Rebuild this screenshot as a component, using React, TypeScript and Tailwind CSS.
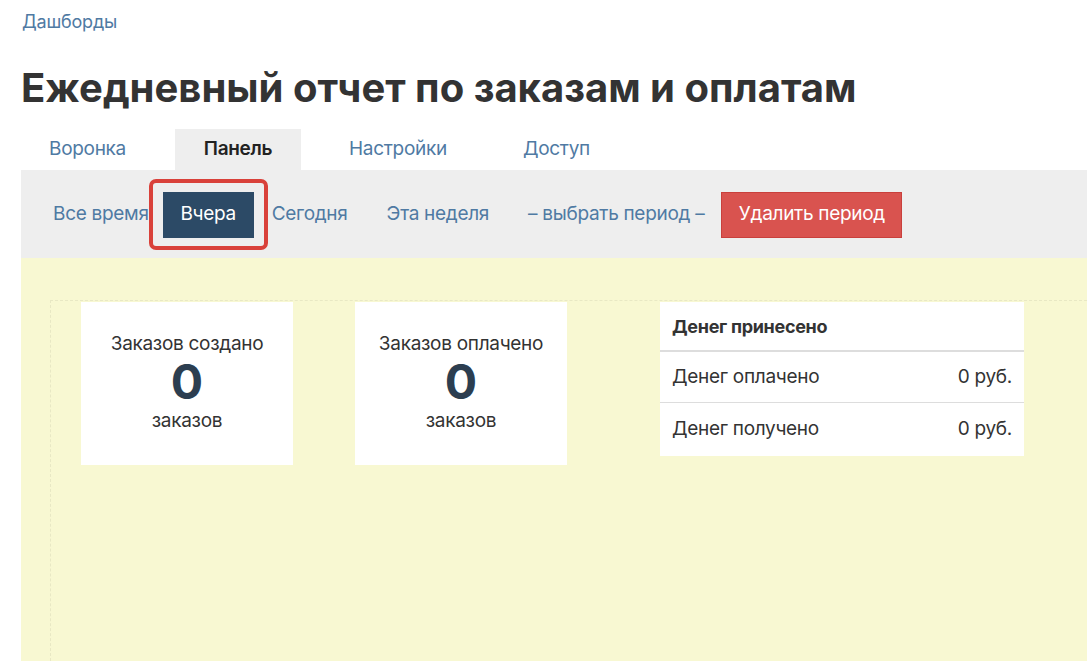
import React from "react";

const font = { fontFamily: "Inter, 'Noto Sans', sans-serif" };

function StatCard({ title }: { title: string }) {
  return (
    <div className="w-[212px] h-[163px] bg-white flex flex-col items-center pt-[29px] text-[#333]">
      <div className="text-[19px] leading-[26px] tracking-[-0.3px]">{title}</div>
      <div className="text-[48px] leading-[52px] font-bold text-[#2c3e50] -mt-[1px]">0</div>
      <div className="text-[19px] leading-[26px] tracking-[-0.3px]">заказов</div>
    </div>
  );
}

export default function App() {
  return (
    <div style={font} className="w-[1087px] h-[661px] overflow-hidden bg-white">
      <div className="pl-[22px] pt-[10px] text-[18px] leading-[24px] text-[#4f7aa3] tracking-[-0.2px]">Дашборды</div>
      <h1 className="pl-[21px] mt-[30px] text-[40px] leading-[48px] font-bold text-[#333] tracking-[0px]">
        Ежедневный отчет по заказам и оплатам
      </h1>
      <div className="ml-[21px] mt-[17px]">
        <div className="flex h-[41px] text-[19px] tracking-[-0.3px]">
          <div className="w-[154px] flex items-center pl-[28px] text-[#4f7aa3]">Воронка</div>
          <div className="w-[126px] flex items-center justify-center bg-[#eeeeee] text-[#222] font-semibold">Панель</div>
          <div className="ml-[48px] flex items-center text-[#4f7aa3]">Настройки</div>
          <div className="ml-[76px] flex items-center text-[#4f7aa3]">Доступ</div>
        </div>
        <div className="h-[88px] bg-[#eeeeee] flex items-center pl-[32px] pt-[1px] text-[19px] tracking-[-0.3px] text-[#4f7aa3]">
          <span>Все время</span>
          <div className="w-[119px] h-[71px] rounded-[7px] border-[4px] border-[#d9413a] flex items-center justify-center">
            <div className="w-[91px] h-[46px] bg-[#2c4a66] text-white flex items-center justify-center">Вчера</div>
          </div>
          <span className="ml-[4px]">Сегодня</span>
          <span className="ml-[39px]">Эта неделя</span>
          <span className="ml-[39px]">– выбрать период –</span>
          <div className="ml-[17px] w-[181px] h-[46px] bg-[#d9534f] border border-[#c9403c] text-white flex items-center justify-center">
            Удалить период
          </div>
        </div>
        <div className="h-[403px] bg-[#f8f8d2] pt-[42px] pl-[29px]">
          <div className="h-full border-l border-t border-dashed border-[#e8e8c4] pt-[1px] pl-[30px] flex items-start">
            <StatCard title="Заказов создано" />
            <div className="ml-[62px]">
              <StatCard title="Заказов оплачено" />
            </div>
            <div className="ml-[93px] w-[364px] bg-white text-[19px] tracking-[-0.3px] text-[#333]">
              <div className="h-[50px] flex items-center px-[12px] font-bold text-[18px] border-b-[2px] border-[#dddddd]">Денег принесено</div>
              <div className="h-[51px] flex items-center justify-between px-[12px] border-b border-[#dddddd]">
                <span>Денег оплачено</span>
                <span>0 руб.</span>
              </div>
              <div className="h-[53px] flex items-center justify-between px-[12px]">
                <span>Денег получено</span>
                <span>0 руб.</span>
              </div>
            </div>
          </div>
        </div>
      </div>
    </div>
  );
}
